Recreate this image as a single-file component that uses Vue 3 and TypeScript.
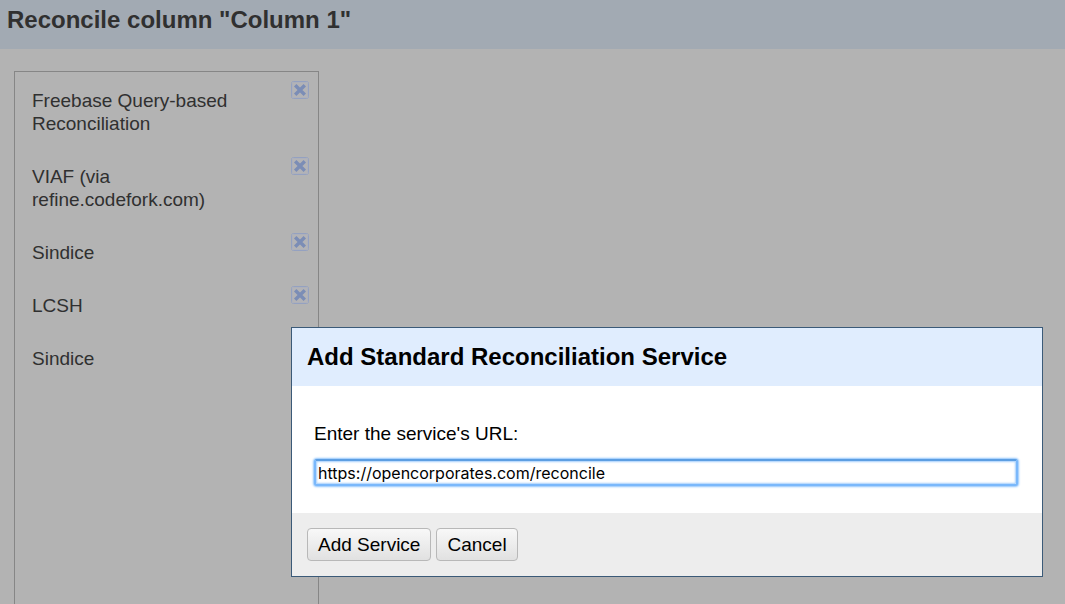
<script setup lang="ts">
import { ref } from 'vue'

interface Service {
  id: number
  name: string
}

const services = ref<Service[]>([
  { id: 1, name: 'Freebase Query-based Reconciliation' },
  { id: 2, name: 'VIAF (via refine.codefork.com)' },
  { id: 3, name: 'Sindice' },
  { id: 4, name: 'LCSH' },
  { id: 5, name: 'Sindice' },
])
const url = ref('https://opencorporates.com/reconcile')
const dialogOpen = ref(true)

function removeService(id: number) {
  services.value = services.value.filter((s) => s.id !== id)
}

function addService() {
  services.value.push({ id: Date.now(), name: url.value })
  dialogOpen.value = false
}
</script>

<template>
  <div class="page">
    <header class="page-header">
      <h1>Reconcile column "Column 1"</h1>
    </header>
    <main class="page-body">
      <ul class="services">
        <li v-for="service in services" :key="service.id" class="service">
          <span class="service-name">{{ service.name }}</span>
          <button
            type="button"
            class="remove"
            :aria-label="`Remove ${service.name}`"
            @click="removeService(service.id)"
          >
            <svg viewBox="0 0 18 18" width="18" height="18" aria-hidden="true">
              <rect x="0.5" y="0.5" width="17" height="17" rx="2" fill="#b3b3b6" stroke="#94a1c1" />
              <rect x="1.5" y="1.5" width="15" height="15" fill="none" stroke="#adb0ba" />
              <path d="M4.2 4.2L13.8 13.8M13.8 4.2L4.2 13.8" stroke="#7b8db6" stroke-width="3.4" />
            </svg>
          </button>
        </li>
      </ul>
    </main>

    <form
      v-if="dialogOpen"
      class="dialog"
      role="dialog"
      aria-labelledby="dialog-title"
      @submit.prevent="addService"
    >
      <h2 id="dialog-title" class="dialog-header">Add Standard Reconciliation Service</h2>
      <div class="dialog-body">
        <label for="service-url">Enter the service's URL:</label>
        <input id="service-url" v-model="url" type="text" spellcheck="false" />
      </div>
      <footer class="dialog-footer">
        <button type="submit" class="button">Add Service</button>
        <button type="button" class="button" @click="dialogOpen = false">Cancel</button>
      </footer>
    </form>
  </div>
</template>

<style>
body {
  margin: 0;
  background: #b3b3b3;
}
</style>

<style scoped>
.page {
  box-sizing: border-box;
  display: flex;
  flex-direction: column;
  min-height: 100vh;
  background: #b3b3b3;
  color: #303030;
  font-family: "Liberation Sans", Arial, sans-serif;
  font-size: 19px;
  line-height: 23px;
}

.page-header {
  padding: 6px 7px 15px;
  background: #a2aab3;
}

h1,
h2 {
  margin: 0;
  font-size: 24px;
  line-height: 28px;
  font-weight: bold;
}

.page-body {
  display: flex;
  flex: 1;
  padding: 22px 14px 0;
}

.services {
  box-sizing: border-box;
  width: 305px;
  margin: 0;
  padding: 2px 9px 0 1px;
  border: 1px solid #868686;
  border-bottom: 0;
  list-style: none;
}

.service {
  display: flex;
  align-items: flex-start;
  justify-content: space-between;
  padding: 0 0 0 16px;
}

.service-name {
  width: 210px;
  padding: 15px 0;
}

.remove {
  flex: none;
  margin: 7px 0 0;
  padding: 0;
  border: 0;
  background: none;
  cursor: pointer;
}

.remove svg {
  display: block;
}

.dialog {
  position: fixed;
  right: 22px;
  bottom: 27px;
  box-sizing: border-box;
  width: 752px;
  max-width: calc(100vw - 44px);
  border: 1px solid #3b5a78;
  background: #fff;
  color: #000;
}

.dialog-header {
  padding: 15px;
  background: #e0edfe;
}

.dialog-body {
  display: flex;
  flex-direction: column;
  gap: 14px;
  padding: 36px 24px 27px 22px;
}

.dialog-body input {
  box-sizing: border-box;
  width: 100%;
  height: 27px;
  padding: 0 2px;
  border: 2px solid #7ab8fb;
  border-top-color: #5c9ee2;
  border-radius: 3px;
  outline: none;
  background: #fff;
  box-shadow: 0 0 2px 1px #8fc4fc, inset 0 0 2px 1px #a5cffc;
  color: #000;
  font-family: Inter, sans-serif;
  font-size: 16px;
}

.dialog-footer {
  display: flex;
  gap: 5px;
  padding: 15px;
  background: #ededed;
}

.button {
  height: 33px;
  padding: 0 10px;
  border: 1px solid #b8b8b8;
  border-radius: 4px;
  background: linear-gradient(#f8f8f8, #e1e1e1);
  color: #000;
  font-family: inherit;
  font-size: 19px;
  line-height: 23px;
}
</style>
